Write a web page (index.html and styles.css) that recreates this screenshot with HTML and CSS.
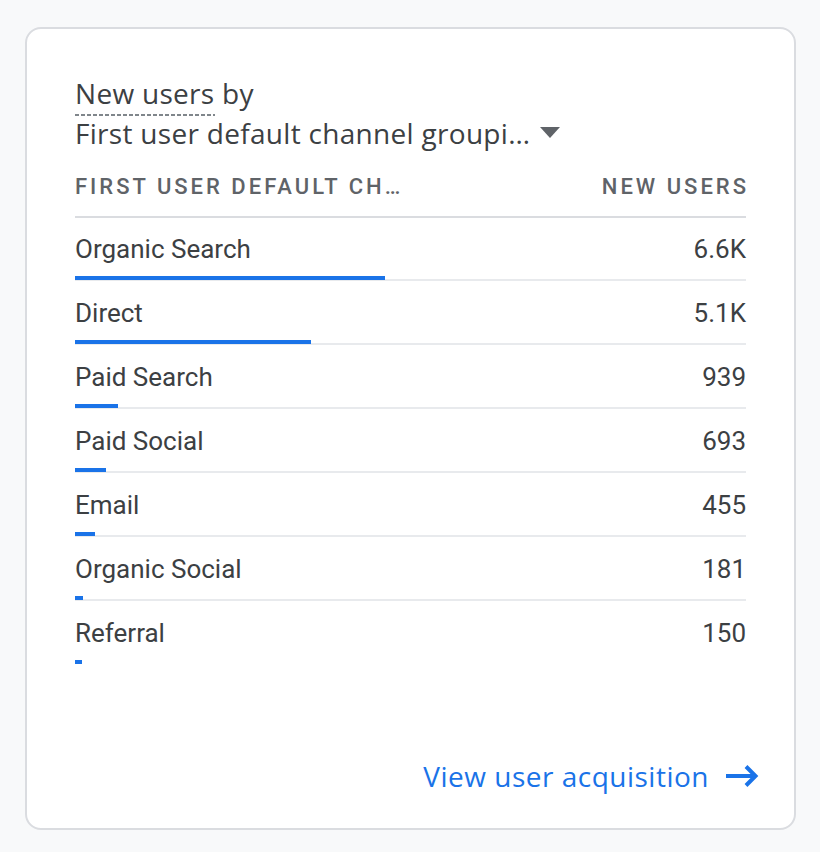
FILE: index.html
```html
<!DOCTYPE html>
<html>
<head>
<meta charset="utf-8">
<link rel="stylesheet" href="styles.css">
</head>
<body>
<div class="card">
  <div class="title">
    <div class="t1"><span class="dashed">New users</span> by</div>
    <div class="t2"><span>First user default channel groupi…</span><svg class="caret" width="20" height="11" viewBox="0 0 20 11"><path d="M0 0h20L10 11z" fill="#5f6368"/></svg></div>
  </div>
  <div class="thead">
    <span>FIRST USER DEFAULT CH…</span>
    <span>NEW USERS</span>
  </div>
  <div class="rows">
    <div class="row"><div class="line"><span>Organic Search</span><span>6.6K</span></div><div class="track"><div class="bar" style="width:310px"></div></div></div>
    <div class="row"><div class="line"><span>Direct</span><span>5.1K</span></div><div class="track"><div class="bar" style="width:236px"></div></div></div>
    <div class="row"><div class="line"><span>Paid Search</span><span>939</span></div><div class="track"><div class="bar" style="width:43px"></div></div></div>
    <div class="row"><div class="line"><span>Paid Social</span><span>693</span></div><div class="track"><div class="bar" style="width:31px"></div></div></div>
    <div class="row"><div class="line"><span>Email</span><span>455</span></div><div class="track"><div class="bar" style="width:20px"></div></div></div>
    <div class="row"><div class="line"><span>Organic Social</span><span>181</span></div><div class="track"><div class="bar" style="width:8px"></div></div></div>
    <div class="row last"><div class="line"><span>Referral</span><span>150</span></div><div class="track"><div class="bar" style="width:7px"></div></div></div>
  </div>
  <div class="footer">
    <a class="link" href="#">View user acquisition<svg class="arrow" width="33" height="24" viewBox="0 0 33 24"><path d="M0 12h29M20 2.5l9.5 9.5L20 21.5" fill="none" stroke="#1a73e8" stroke-width="4"/></svg></a>
  </div>
</div>
</body>
</html>
```
FILE: styles.css
```css
html, body {
  margin: 0;
  padding: 0;
  background: #f8f9fa;
}
body {
  padding: 27px 0 0 25px;
  font-family: "Open Sans", Roboto, sans-serif;
  color: #3c4043;
}
.card {
  box-sizing: border-box;
  width: 771px;
  height: 803px;
  background: #fff;
  border: 2px solid #dadce0;
  border-radius: 16px;
  padding: 44px 48px 36px 48px;
  display: flex;
  flex-direction: column;
}
.title {
  font-size: 28px;
  line-height: 40px;
  letter-spacing: 0.3px;
  color: #3c4043;
}
.dashed {
  padding-bottom: 4px;
  background-image: repeating-linear-gradient(to right, #80868b 0 4px, transparent 4px 6px);
  background-size: 100% 2px;
  background-repeat: no-repeat;
  background-position: 0 100%;
}
.t2 {
  display: flex;
  align-items: center;
  gap: 10px;
}
.caret {
  display: block;
  margin-top: -2px;
}
.thead {
  display: flex;
  justify-content: space-between;
  font-family: Roboto, sans-serif;
  font-weight: 500;
  font-size: 22px;
  letter-spacing: 3px;
  color: #5f6368;
  line-height: 28px;
  padding-top: 20px;
  padding-bottom: 15px;
  border-bottom: 2px solid #dadce0;
}
.thead span:last-child {
  margin-right: -3px;
}
.row {
  padding-top: 16px;
  padding-bottom: 1px;
}
.line {
  display: flex;
  justify-content: space-between;
  font-family: Roboto, sans-serif;
  font-size: 26px;
  line-height: 30px;
  color: #3c4043;
  margin-bottom: 12px;
}
.track {
  height: 5px;
  background: linear-gradient(to bottom, transparent 0 3px, #e8eaed 3px 5px);
}
.last .track {
  background: none;
}
.bar {
  height: 4px;
  background: #1a73e8;
}
.footer {
  margin-top: auto;
  display: flex;
  justify-content: flex-end;
  margin-right: -13px;
}
.link {
  display: flex;
  align-items: center;
  gap: 17px;
  color: #1a73e8;
  text-decoration: none;
  font-size: 28px;
  line-height: 32px;
  letter-spacing: 0.5px;
}
.arrow {
  display: block;
}
```
